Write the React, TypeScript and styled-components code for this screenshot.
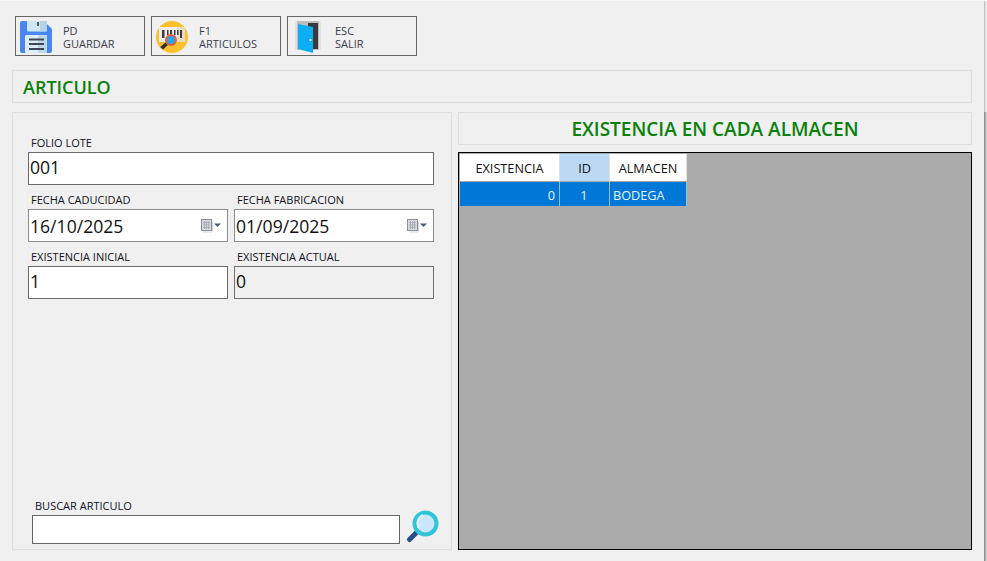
import React from 'react';
import styled, { createGlobalStyle } from "styled-components";

const GlobalStyle = createGlobalStyle`
  html, body {
    margin: 0;
    padding: 0;
    background: #f0f0f0;
  }
  * {
    box-sizing: border-box;
  }
`;

const Page = styled.div`
  width: 987px;
  height: 561px;
  display: flex;
  overflow: hidden;
  background: #f0f0f0;
  border-top: 1px solid #f9f9f9;
  font-family: "Open Sans", "Noto Sans", sans-serif;
`;

const Main = styled.div`
  width: 984px;
  padding: 15px 12px 0 12px;
  display: flex;
  flex-direction: column;
`;

const Edge = styled.div`
  width: 3px;
  display: flex;
  flex-direction: column;
`;

const EdgeTop = styled.div`
  height: 111px;
  background: linear-gradient(to right, #b4b4b4, #dcdcdc 40%, #f0f0f0);
`;

const EdgeBottom = styled.div`
  flex: 1;
  background: linear-gradient(to right, #7c7c7c, #a8a8a8 40%, #e6e6e6);
`;

const Toolbar = styled.div`
  display: flex;
  gap: 6px;
  padding-left: 3px;
`;

const ToolButton = styled.button`
  width: 130px;
  height: 40px;
  padding: 0 0 0 4px;
  display: flex;
  align-items: center;
  background: #f0f0f0;
  border: 1px solid #666666;
  font-family: inherit;
  text-align: left;
`;

const ToolIcon = styled.svg`
  width: 32px;
  height: 32px;
  margin-top: 2px;
  flex-shrink: 0;
`;

const ToolText = styled.div`
  margin-left: 11px;
  padding-top: 1px;
  font-size: 11px;
  line-height: 13px;
  color: #3b3b4a;
`;

const TitleBar = styled.div`
  height: 33px;
  padding: 0 10px;
  display: flex;
  align-items: center;
  border: 1px solid #dedede;
  font-size: 18px;
  font-weight: 600;
  color: #0b810b;
`;

const ArticleBar = styled(TitleBar)`
  margin-top: 14px;
`;

const StockTitle = styled(TitleBar)`
  justify-content: center;
  font-size: 19px;
`;

const Columns = styled.div`
  margin-top: 9px;
  height: 438px;
  display: flex;
  gap: 6px;
`;

const LeftPanel = styled.div`
  width: 440px;
  padding: 15px 17px 5px 15px;
  display: flex;
  flex-direction: column;
  border: 1px solid #dedede;
`;

const RightColumn = styled.div`
  width: 514px;
  display: flex;
  flex-direction: column;
  gap: 7px;
`;

const Row = styled.div`
  display: grid;
  grid-template-columns: 200px 200px;
  gap: 6px;
`;

const Field = styled.div`
  min-width: 0;
`;

const Label = styled.div`
  height: 24px;
  padding: 7px 0 0 3px;
  font-size: 11px;
  line-height: 16px;
  color: #111122;
`;

const InputBox = styled.div<{ $readOnly?: boolean }>`
  height: 33px;
  padding: 0 0 3px 1px;
  display: flex;
  align-items: center;
  justify-content: space-between;
  background: ${({ $readOnly }) => ($readOnly ? "#f0f0f0" : "#ffffff")};
  border: 1px solid ${({ $readOnly }) => ($readOnly ? "#707070" : "#6a6a6a")};
  font-size: 17.6px;
  color: #111111;
`;

const DateBox = styled(InputBox)`
  padding-bottom: 0;
  border-color: #8c8c8c;
`;

const DatePicker = styled.svg`
  width: 21px;
  height: 14px;
  margin-right: 6px;
  flex-shrink: 0;
`;

const SearchArea = styled.div`
  margin: auto -5px 0 0;
  padding-left: 4px;
`;

const SearchLabel = styled(Label)`
  height: 17px;
  padding-top: 0;
`;

const SearchRow = styled.div`
  height: 29px;
  display: flex;
  align-items: flex-end;
`;

const SearchInput = styled.div`
  width: 368px;
  height: 29px;
  flex-shrink: 0;
  background: #ffffff;
  border: 1px solid #666666;
`;

const SearchIcon = styled.svg`
  width: 34px;
  height: 34px;
  margin-left: 5px;
  flex-shrink: 0;
`;

const GridArea = styled.div`
  flex: 1;
  padding: 1px;
  background: #ababab;
  border: 1px solid #000000;
`;

const Table = styled.table`
  border-collapse: separate;
  border-spacing: 0;
  table-layout: fixed;
  width: 227px;
  font-size: 12.7px;
`;

const HeadCell = styled.th<{ $width: number; $active?: boolean }>`
  width: ${({ $width }) => $width}px;
  height: 28px;
  padding: 1px 0 0;
  font-weight: 400;
  text-align: center;
  color: #111111;
  background: ${({ $active }) => ($active ? "#bbd9f2" : "#ffffff")};
  border-right: 1px solid #e2e2e2;
  border-bottom: 1px solid #a8a8a8;
`;

const BodyCell = styled.td<{ $align: string }>`
  height: 24px;
  padding: 1px 4px 0 3px;
  text-align: ${({ $align }) => $align};
  background: #0078d7;
  color: #e8f2fb;
  border-right: 1px solid #a0bcd4;
`;

function FloppyIcon() {
  return (
    <ToolIcon viewBox="0 0 32 32">
      <path d="M2 0h22l8 8v22a2 2 0 0 1-2 2H2a2 2 0 0 1-2-2V2a2 2 0 0 1 2-2z" fill="#4a86f0" />
      <path d="M7 0h20v9a1.500 1.500 0 0 1-1.500 1.500h-17A1.500 1.500 0 0 1 7 9z" fill="#cfe6f5" />
      <path d="M20 0h7v9a1.500 1.500 0 0 1-1.500 1.500H20z" fill="#b4d3e8" />
      <rect x="17" y="1" width="2" height="4" fill="#4c5566" />
      <rect x="5" y="14" width="22" height="18" rx="1.500" fill="#dcedf8" />
      <rect x="18" y="14" width="9" height="18" fill="#bcd8ea" />
      <rect x="9" y="17.500" width="15" height="2" fill="#3c4654" />
      <rect x="9" y="22" width="15" height="2" fill="#3c4654" />
      <rect x="9" y="27" width="15" height="2" fill="#3c4654" />
    </ToolIcon>
  );
}

function BarcodeIcon() {
  return (
    <ToolIcon viewBox="0 0 32 32">
      <circle cx="16" cy="16" r="16" fill="#fbc02d" />
      <rect x="3" y="6" width="26" height="15" fill="#f3efe6" />
      <rect x="21" y="6" width="8" height="15" fill="#e6dcc6" />
      <g fill="#3a3a44">
        <rect x="6" y="9" width="2.500" height="8" />
        <rect x="11" y="9" width="1.500" height="5" />
        <rect x="14" y="9" width="2" height="5" />
        <rect x="18" y="9" width="1.500" height="5" />
        <rect x="21" y="9" width="1.500" height="5" />
        <rect x="24" y="9" width="2" height="8" />
      </g>
      <path d="M9.500 21.500l2.500 2.500-5 4.500-2.800-2.500z" fill="#2f2f38" />
      <circle cx="15" cy="19" r="5" fill="#2aa5e6" stroke="#f05a3c" strokeWidth="2" />
    </ToolIcon>
  );
}

function DoorIcon() {
  return (
    <ToolIcon viewBox="0 0 32 32">
      <rect x="3" y="0" width="26" height="29" fill="#e2e2e2" />
      <rect x="5" y="0" width="22" height="29" fill="#bdbdbd" />
      <rect x="16" y="2" width="10" height="26" fill="#3a3a3c" />
      <path d="M6 3l15 3v26L6 28z" fill="#0eaef6" />
      <rect x="17.500" y="18" width="2" height="2" fill="#eaf6ff" />
    </ToolIcon>
  );
}

function CalendarDrop() {
  return (
    <DatePicker viewBox="0 0 21 14">
      <rect x="1.500" y="0.500" width="10" height="11" fill="#d8dae0" stroke="#8a8f9a" />
      <path d="M3 3.500h7M3 6h7M3 8.500h7M4.500 2v8M6.500 2v8M8.500 2v8" stroke="#a2a6b0" strokeWidth="0.800" />
      <path d="M12 13H3M12.500 12.500V3" stroke="#d4d4d4" />
      <path d="M14 4.500h7l-3.500 3.500z" fill="#4a5a78" />
    </DatePicker>
  );
}

export default function App() {
  return (
    <Page>
      <GlobalStyle />
      <Main>
        <Toolbar>
          <ToolButton>
            <FloppyIcon />
            <ToolText>PD<br />GUARDAR</ToolText>
          </ToolButton>
          <ToolButton>
            <BarcodeIcon />
            <ToolText>F1<br />ARTICULOS</ToolText>
          </ToolButton>
          <ToolButton>
            <DoorIcon />
            <ToolText>ESC<br />SALIR</ToolText>
          </ToolButton>
        </Toolbar>
        <ArticleBar>ARTICULO</ArticleBar>
        <Columns>
          <LeftPanel>
            <Field>
              <Label>FOLIO LOTE</Label>
              <InputBox>001</InputBox>
            </Field>
            <Row>
              <Field>
                <Label>FECHA CADUCIDAD</Label>
                <DateBox>16/10/2025<CalendarDrop /></DateBox>
              </Field>
              <Field>
                <Label>FECHA FABRICACION</Label>
                <DateBox>01/09/2025<CalendarDrop /></DateBox>
              </Field>
            </Row>
            <Row>
              <Field>
                <Label>EXISTENCIA INICIAL</Label>
                <InputBox>1</InputBox>
              </Field>
              <Field>
                <Label>EXISTENCIA ACTUAL</Label>
                <InputBox $readOnly>0</InputBox>
              </Field>
            </Row>
            <SearchArea>
              <SearchLabel>BUSCAR ARTICULO</SearchLabel>
              <SearchRow>
                <SearchInput />
                <SearchIcon viewBox="0 0 34 34">
                  <path d="M13 21L4.500 29.500" fill="none" stroke="#2b4f8c" strokeWidth="5" strokeLinecap="round" />
                  <circle cx="20.500" cy="13.500" r="11" fill="#c9e6fb" stroke="#2fc4d8" strokeWidth="4" />
                  <path d="M14 18a9 9 0 0 1 4-13" fill="none" stroke="#e4f3fd" strokeWidth="2" />
                </SearchIcon>
              </SearchRow>
            </SearchArea>
          </LeftPanel>
          <RightColumn>
            <StockTitle>EXISTENCIA EN CADA ALMACEN</StockTitle>
            <GridArea>
              <Table>
                <thead>
                  <tr>
                    <HeadCell $width={100}>EXISTENCIA</HeadCell>
                    <HeadCell $width={50} $active>ID</HeadCell>
                    <HeadCell $width={77}>ALMACEN</HeadCell>
                  </tr>
                </thead>
                <tbody>
                  <tr>
                    <BodyCell $align="right">0</BodyCell>
                    <BodyCell $align="center">1</BodyCell>
                    <BodyCell $align="left">BODEGA</BodyCell>
                  </tr>
                </tbody>
              </Table>
            </GridArea>
          </RightColumn>
        </Columns>
      </Main>
      <Edge>
        <EdgeTop />
        <EdgeBottom />
      </Edge>
    </Page>
  );
}
